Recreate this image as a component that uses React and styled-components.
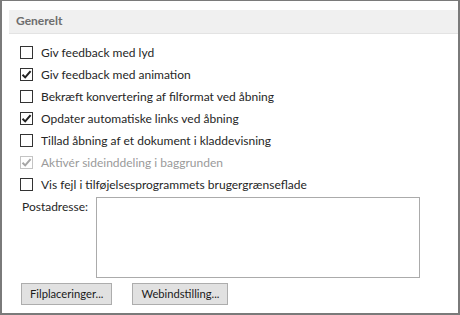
import styled, { createGlobalStyle } from 'styled-components';

const GlobalStyle = createGlobalStyle`
  html, body {
    margin: 0;
    padding: 0;
    background: #ffffff;
  }
  * {
    box-sizing: border-box;
  }
`;

const options = [
  { label: 'Giv feedback med lyd', checked: false },
  { label: 'Giv feedback med animation', checked: true },
  { label: 'Bekræft konvertering af filformat ved åbning', checked: false },
  { label: 'Opdater automatiske links ved åbning', checked: true },
  { label: 'Tillad åbning af et dokument i kladdevisning', checked: false },
  { label: 'Aktivér sideinddeling i baggrunden', checked: true, disabled: true },
  { label: 'Vis fejl i tilføjelsesprogrammets brugergrænseflade', checked: false },
];

function CheckMark({ disabled }) {
  return (
    <svg width="11" height="11" viewBox="0 0 11 11">
      <path
        d="M1.5 5.8 L4.2 8.4 L9.6 2.2"
        fill="none"
        stroke={disabled ? '#a6a6a6' : '#222'}
        strokeWidth="2"
      />
    </svg>
  );
}

export default function App() {
  return (
    <>
      <GlobalStyle />
      <Frame>
        <Header>Generelt</Header>
        <List>
          {options.map((o) => (
            <Row key={o.label} disabled={o.disabled}>
              <Box disabled={o.disabled}>{o.checked && <CheckMark disabled={o.disabled} />}</Box>
              {o.label}
            </Row>
          ))}
        </List>
        <AddressRow>
          <Label>Postadresse:</Label>
          <Area />
        </AddressRow>
        <Buttons>
          <Button>Filplaceringer...</Button>
          <Button>Webindstilling...</Button>
        </Buttons>
      </Frame>
    </>
  );
}

const Frame = styled.div`
  width: 460px;
  height: 315px;
  border: 2px solid #7a7a7a;
  border-top-width: 1px;
  padding: 9px 0 0 7px;
  font-family: 'Lato', 'Noto Sans', sans-serif;
  font-size: 12px;
  color: #262626;
  background: #fff;
`;

const Header = styled.div`
  height: 24px;
  line-height: 22px;
  padding-left: 7px;
  background: #f0f0f0;
  border-bottom: 1px solid #e3e3e3;
  color: #6d6d6d;
  font-weight: 700;
`;

const List = styled.div`
  display: flex;
  flex-direction: column;
  padding: 7px 0 0 11px;
`;

const Row = styled.div`
  display: flex;
  align-items: center;
  gap: 8px;
  height: 22.1px;
  color: ${(p) => (p.disabled ? '#9a9a9a' : '#262626')};
`;

const Box = styled.span`
  width: 13px;
  height: 13px;
  flex: none;
  border: 1px solid ${(p) => (p.disabled ? '#c4c4c4' : '#333')};
  display: flex;
  align-items: center;
  justify-content: center;
  background: #fff;
`;

const AddressRow = styled.div`
  display: flex;
  margin-top: 1px;
  padding-left: 13px;
  gap: 2px;
`;

const Label = styled.div`
  width: 72px;
  padding-top: 2px;
`;

const Area = styled.div`
  width: 324px;
  height: 81px;
  border: 1px solid #ababab;
`;

const Buttons = styled.div`
  display: flex;
  gap: 20px;
  padding: 5px 0 0 12px;
`;

const Button = styled.button`
  height: 22px;
  padding: 0 8px;
  font-family: inherit;
  font-size: 11.2px;
  color: #1a1a1a;
  background: #e1e1e1;
  border: 1px solid #adadad;
`;
